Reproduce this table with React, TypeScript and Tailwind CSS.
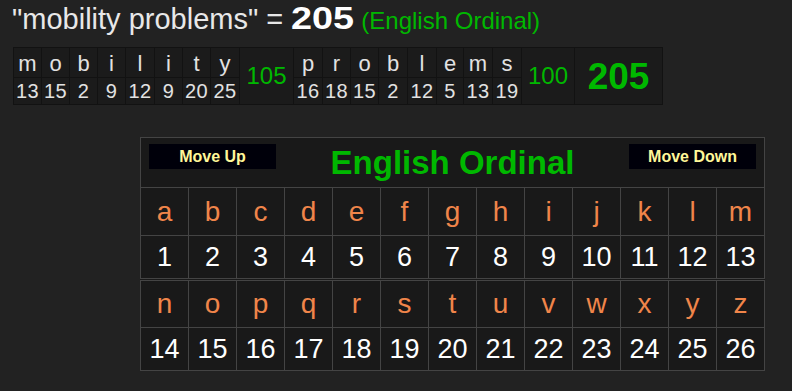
import React from "react";

type Cell = [string, number, number];

const g1: Cell[] = [
  ["m", 13, 27], ["o", 15, 27], ["b", 2, 27], ["i", 9, 27],
  ["l", 12, 28], ["i", 9, 27], ["t", 20, 27], ["y", 25, 28],
];
const g2: Cell[] = [
  ["p", 16, 28], ["r", 18, 27], ["o", 15, 27], ["b", 2, 28],
  ["l", 12, 28], ["e", 5, 26], ["m", 13, 28], ["s", 19, 28],
];

const wClass = (w: number) =>
  w === 28 ? "w-[28px]" : w === 26 ? "w-[26px]" : "w-[27px]";

function LetterCol({ c }: { c: Cell }) {
  return (
    <div className={`flex flex-col gap-px ${wClass(c[2])}`}>
      <div className="h-[29px] bg-[#1b1b1b] text-center text-[22px] leading-[31px] text-[#e2e2e2]">
        {c[0]}
      </div>
      <div className="h-[26px] whitespace-nowrap bg-[#1b1b1b] text-center text-[20px] leading-[26px] tracking-[0.5px] text-[#e2e2e2]">
        {c[1]}
      </div>
    </div>
  );
}

const row1 = "abcdefghijklm".split("");
const row2 = "nopqrstuvwxyz".split("");

function Block({ letters, offset, letterH }: { letters: string[]; offset: number; letterH: string }) {
  return (
    <div className="grid grid-cols-[repeat(13,47px)] gap-px">
      {letters.map((l, i) => (
        <div
          key={"l" + i}
          className={`${letterH} flex items-center justify-center bg-[#191919] text-[28px] leading-none text-[#f0854a]`}
        >
          {l}
        </div>
      ))}
      {letters.map((_, i) => (
        <div
          key={"n" + i}
          className="flex h-[42px] items-center justify-center bg-[#191919] text-[27px] leading-none text-white"
        >
          {i + 1 + offset}
        </div>
      ))}
    </div>
  );
}

export default function App() {
  return (
    <div className="min-h-screen w-full bg-[#222] font-['Liberation_Sans',Arial,sans-serif]">
      <div className="flex h-[47px] items-baseline pl-[12px]">
        <span className="text-[29px] leading-none text-[#e8e8e8]">"mobility problems" =&nbsp;</span>
        <span className="mr-[10px] inline-block origin-left scale-x-[1.18] text-[32px] font-bold leading-[37px] text-white">
          205
        </span>
        <span className="text-[24px] leading-none text-[#00b800]">&nbsp;(English Ordinal)</span>
      </div>

      <div className="ml-[13px] inline-flex h-[58px] gap-px bg-[#121212] p-px">
        {g1.map((c, i) => (
          <LetterCol key={"a" + i} c={c} />
        ))}
        <div className="flex w-[53px] items-center justify-center bg-[#1b1b1b] text-[24px] leading-none text-[#00b800]">
          105
        </div>
        {g2.map((c, i) => (
          <LetterCol key={"b" + i} c={c} />
        ))}
        <div className="flex w-[52px] items-center justify-center bg-[#1b1b1b] text-[24px] leading-none text-[#00b800]">
          100
        </div>
        <div className="flex w-[87px] items-center justify-center bg-[#1b1b1b] text-[37px] font-bold leading-none text-[#00b800]">
          205
        </div>
      </div>

      <div className="ml-[140px] mt-[32px] flex w-[625px] flex-col gap-px bg-[#191919]">
        <div className="flex flex-col gap-px border border-[#444] bg-[#444]">
          <div className="relative flex h-[49px] items-center justify-center bg-[#191919]">
            <button className="absolute left-[8px] top-[6px] h-[25px] w-[127px] bg-[#00000a] text-[16px] font-bold leading-[25px] text-[#fff799]">
              Move Up
            </button>
            <span className="text-[33px] font-bold leading-none text-[#00b800]">English Ordinal</span>
            <button className="absolute right-[8px] top-[6px] h-[25px] w-[127px] bg-[#00000a] text-[16px] font-bold leading-[25px] text-[#fff799]">
              Move Down
            </button>
          </div>
          <Block letters={row1} offset={0} letterH="h-[47px]" />
        </div>
        <div className="border border-[#444] bg-[#444]">
          <Block letters={row2} offset={13} letterH="h-[46px]" />
        </div>
      </div>
    </div>
  );
}
